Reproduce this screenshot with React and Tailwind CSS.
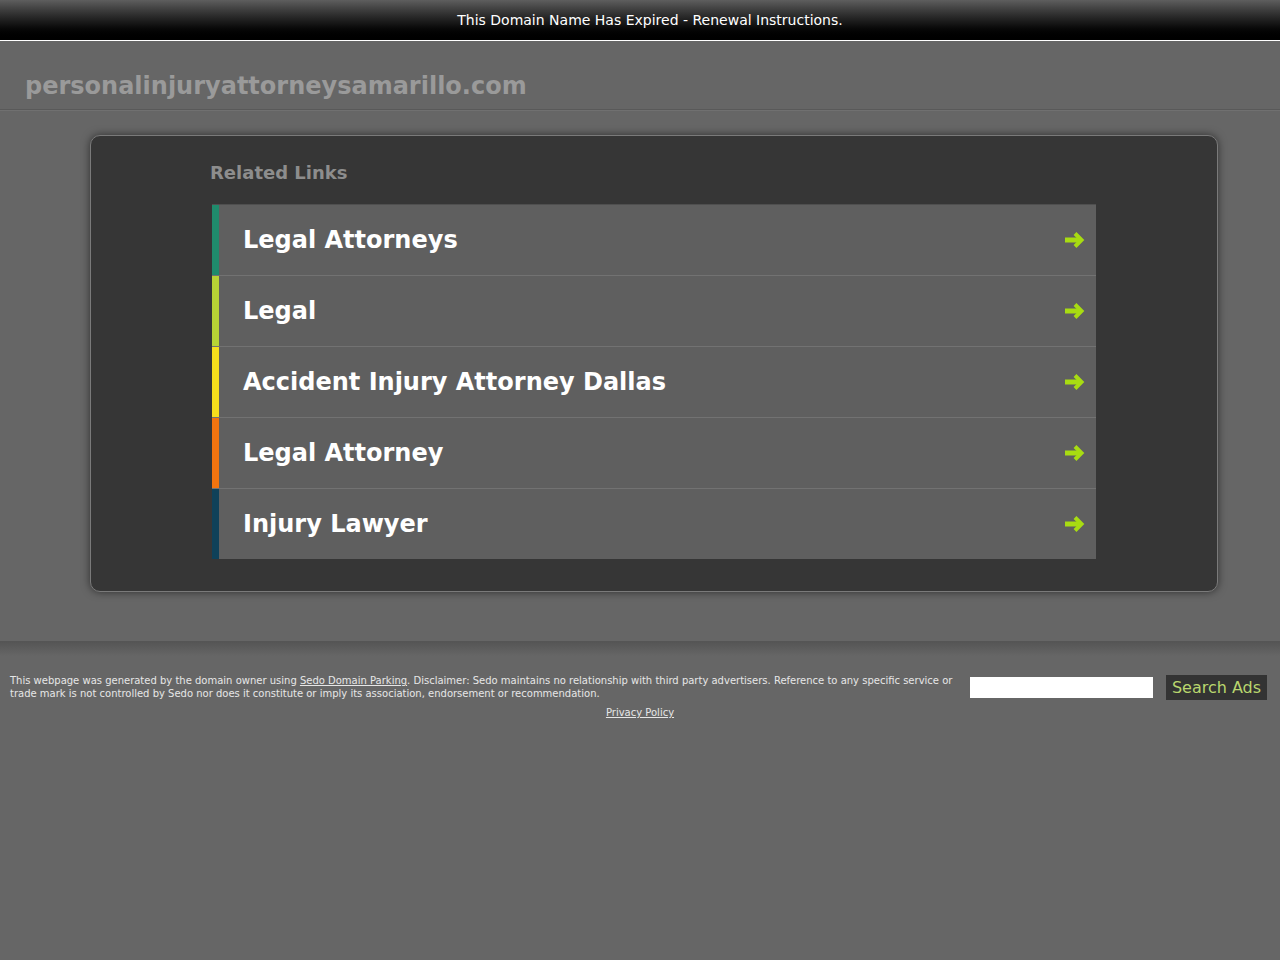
const links = [
  { label: 'Legal Attorneys', bar: 'bg-[#1f8b6c]' },
  { label: 'Legal', bar: 'bg-[#b7d335]' },
  { label: 'Accident Injury Attorney Dallas', bar: 'bg-[#f6df1c]' },
  { label: 'Legal Attorney', bar: 'bg-[#f2740f]' },
  { label: 'Injury Lawyer', bar: 'bg-[#0f4159]' },
]

// Thick green arrow like the parked-page sprite.
function Arrow() {
  return (
    <svg width="22" height="18" viewBox="0 0 22 18" className="shrink-0" fill="none" stroke="#a8dc12">
      <path d="M2 9h15" strokeWidth="5" />
      <path d="M12 2.5l6.5 6.5-6.5 6.5" strokeWidth="4" strokeLinejoin="miter" />
    </svg>
  )
}

export default function App() {
  return (
    <div className="min-h-[960px] bg-[#666666] text-white" style={{ fontFamily: '"DejaVu Sans", Verdana, sans-serif' }}>
      <div className="h-[41px] flex items-center justify-center pl-5 bg-gradient-to-b from-[#5e5e5e] to-[#000000] border-b border-white text-[14px] leading-none">
        This Domain Name Has Expired - Renewal Instructions.
      </div>

      <div className="h-[69px] flex items-end pl-[25px] pb-[11px] border-b border-[#595959] shadow-[0_1px_0_#707070]">
        <h1 className="text-[24px] font-bold text-[#9a9a9a] leading-none">personalinjuryattorneysamarillo.com</h1>
      </div>

      <div className="pt-[25px] pb-[49px] border-b border-[#555555]">
        <div className="ml-[90px] mr-[62px] rounded-[10px] border border-[#7a7a7a] bg-[#363636] shadow-[0_0_8px_rgba(0,0,0,0.55)] pt-[28px] pb-[32px] pl-[119px] pr-[121px]">
          <h2 className="text-[18px] font-bold text-[#8d8d8d] leading-none mb-[22px]">Related Links</h2>
          <ul className="ml-[2px]">
            {links.map((l, i) => (
              <li key={l.label} className={`flex h-[71px] ${i === 0 ? 'border-t border-[#4f4f4f]' : 'border-t border-[#727272]'}`}>
                <span className={`w-[7px] ${l.bar}`} />
                <a href="#" className="flex-1 flex items-center justify-between bg-[#5f5f5f] pl-[24px] pr-[11px]">
                  <span className="text-[24px] font-bold leading-none">{l.label}</span>
                  <Arrow />
                </a>
              </li>
            ))}
          </ul>
        </div>
      </div>

      <div className="bg-gradient-to-b from-[#555555] to-[#666666] h-[14px]" />
      <div className="flex pl-[10px] pr-[13px] pt-[18px]">
        <p className="w-[950px] text-[10px] leading-[13px] text-[#e6e6e6]">
          This webpage was generated by the domain owner using <a href="#" className="underline">Sedo Domain Parking</a>. Disclaimer: Sedo maintains no relationship with third party advertisers. Reference to any specific service or trade mark is not controlled by Sedo nor does it constitute or imply its association, endorsement or recommendation.
        </p>
        <div className="flex items-start gap-[13px] ml-auto">
          <input className="w-[183px] h-[21px] bg-white mt-[3px] text-black text-[12px] px-1 outline-none" />
          <button className="w-[101px] h-[25px] mt-[1px] bg-[#333333] text-[#b9d66e] text-[16px] leading-none">Search Ads</button>
        </div>
      </div>
      <p className="text-center text-[10px] leading-[13px] text-[#e6e6e6] mt-[6px]">
        <a href="#" className="underline">Privacy Policy</a>
      </p>
    </div>
  )
}
